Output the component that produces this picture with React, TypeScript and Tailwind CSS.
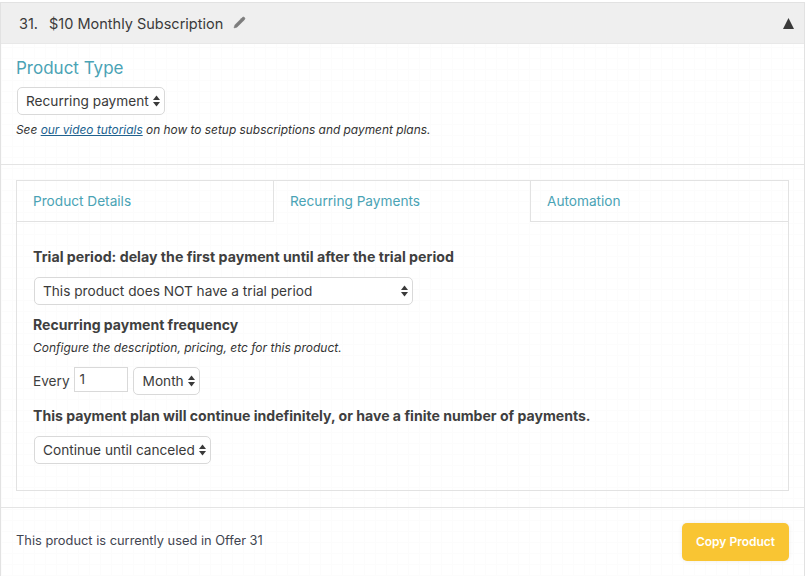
import React from 'react';
import { Pencil } from 'lucide-react';

const Arrows = () => (
  <svg width="7" height="12" viewBox="0 0 7 12" className="shrink-0 text-[#3a3a3a]" fill="currentColor">
    <path d="M3.5 0.5L7 5H0z" />
    <path d="M3.5 11.5L0 7h7z" />
  </svg>
);

const SelectBox = ({ label, className }: { label: string; className: string }) => (
  <div className={`flex h-[28px] items-center justify-between rounded-[5px] border border-[#d9d9d9] bg-white text-[13.65px] text-[#3a3a3a] ${className}`}>
    <span className="whitespace-nowrap">{label}</span>
    <Arrows />
  </div>
);

export default function App() {
  return (
    <div className="h-[576px] w-[806px] overflow-hidden bg-white pt-[2px] font-['Inter','Liberation_Sans',sans-serif] text-[#3f3f3f]">
      <div className="h-[574px] w-[805px] border-t border-r border-l border-[#e2e2e2] bg-[linear-gradient(#fcfcfc_1px,transparent_1px),linear-gradient(90deg,#fcfcfc_1px,transparent_1px)] bg-[size:11px_11px]">
        {/* Header */}
        <div className="flex h-[41px] items-center justify-between border-b border-[#e8e8e8] bg-[#efefef] pr-[10px] pl-[18px]">
          <div className="mt-[2px] flex items-center text-[14.5px] text-[#3a3a3a]">
            <span className="mr-[11px]">31.</span>
            <span>$10 Monthly Subscription</span>
            <Pencil size={13} className="mb-[3px] ml-[10px] text-[#7d7d7d]" fill="currentColor" strokeWidth={1} />
          </div>
          <svg width="11" height="11" viewBox="0 0 11 11" className="text-[#3a3a3a]" fill="currentColor">
            <path d="M5.5 0L11 11H0z" />
          </svg>
        </div>

        {/* Product type */}
        <div className="h-[121px] border-b border-[#e4e4e4] pt-[13px] pl-[15px]">
          <h2 className="text-[17px] leading-[22px] font-normal text-[#4aa3b5]">Product Type</h2>
          <SelectBox label="Recurring payment" className="mt-[8px] ml-[1px] w-[148px] pr-[4px] pl-[8px]" />
          <p className="mt-[7px] text-[11.9px] leading-[15px] text-[#333] italic">
            See <a className="text-[#21628f] underline">our video tutorials</a> on how to setup subscriptions and payment plans.
          </p>
        </div>

        {/* Tabs */}
        <div className="px-[15px] pt-[15px]">
          <div className="h-[311px] w-[773px] border border-[#e2e2e2]">
            <div className="flex h-[41px] text-[13.65px] text-[#4aa3b5]">
              <div className="flex w-[257px] items-center border-r border-b border-[#e2e2e2] pl-[16px]">Product Details</div>
              <div className="flex w-[256px] items-center pl-[16px]">Recurring Payments</div>
              <div className="flex flex-1 items-center border-b border-l border-[#e2e2e2] pl-[16px]">Automation</div>
            </div>
            <div className="pt-[26px] pl-[16px]">
              <p className="text-[14.2px] leading-[17px] font-bold text-[#3f3f3f]">Trial period: delay the first payment until after the trial period</p>
              <SelectBox label="This product does NOT have a trial period" className="mt-[12px] ml-[1px] w-[379px] pr-[4px] pl-[8px]" />
              <p className="mt-[11px] text-[14.05px] leading-[17px] font-bold">Recurring payment frequency</p>
              <p className="mt-[8px] text-[12px] leading-[14px] text-[#333] italic">Configure the description, pricing, etc for this product.</p>
              <div className="mt-[12px] flex items-center text-[13.65px]">
                <span>Every</span>
                <div className="ml-[4px] h-[25px] w-[54px] self-start border border-[#d9d9d9] bg-white pl-[5px] leading-[23px]">1</div>
                <SelectBox label="Month" className="ml-[5px] w-[67px] pr-[4px] pl-[9px]" />
              </div>
              <p className="mt-[12px] text-[14.08px] leading-[17px] font-bold">This payment plan will continue indefinitely, or have a finite number of payments.</p>
              <SelectBox label="Continue until canceled" className="mt-[12px] ml-[1px] w-[177px] pr-[4px] pl-[8px]" />
            </div>
          </div>
        </div>

        {/* Footer */}
        <div className="mt-[16px] flex h-[68px] items-center justify-between border-t border-[#e4e4e4] pr-[15px] pl-[15px]">
          <span className="mb-[2px] text-[12.85px] text-[#3f4450]">This product is currently used in Offer 31</span>
          <button className="h-[38px] w-[107px] rounded-[5px] bg-[#f9c533] text-[12px] font-semibold text-white shadow-[0_0_4px_rgba(0,0,0,0.08)]">Copy Product</button>
        </div>
      </div>
    </div>
  );
}
